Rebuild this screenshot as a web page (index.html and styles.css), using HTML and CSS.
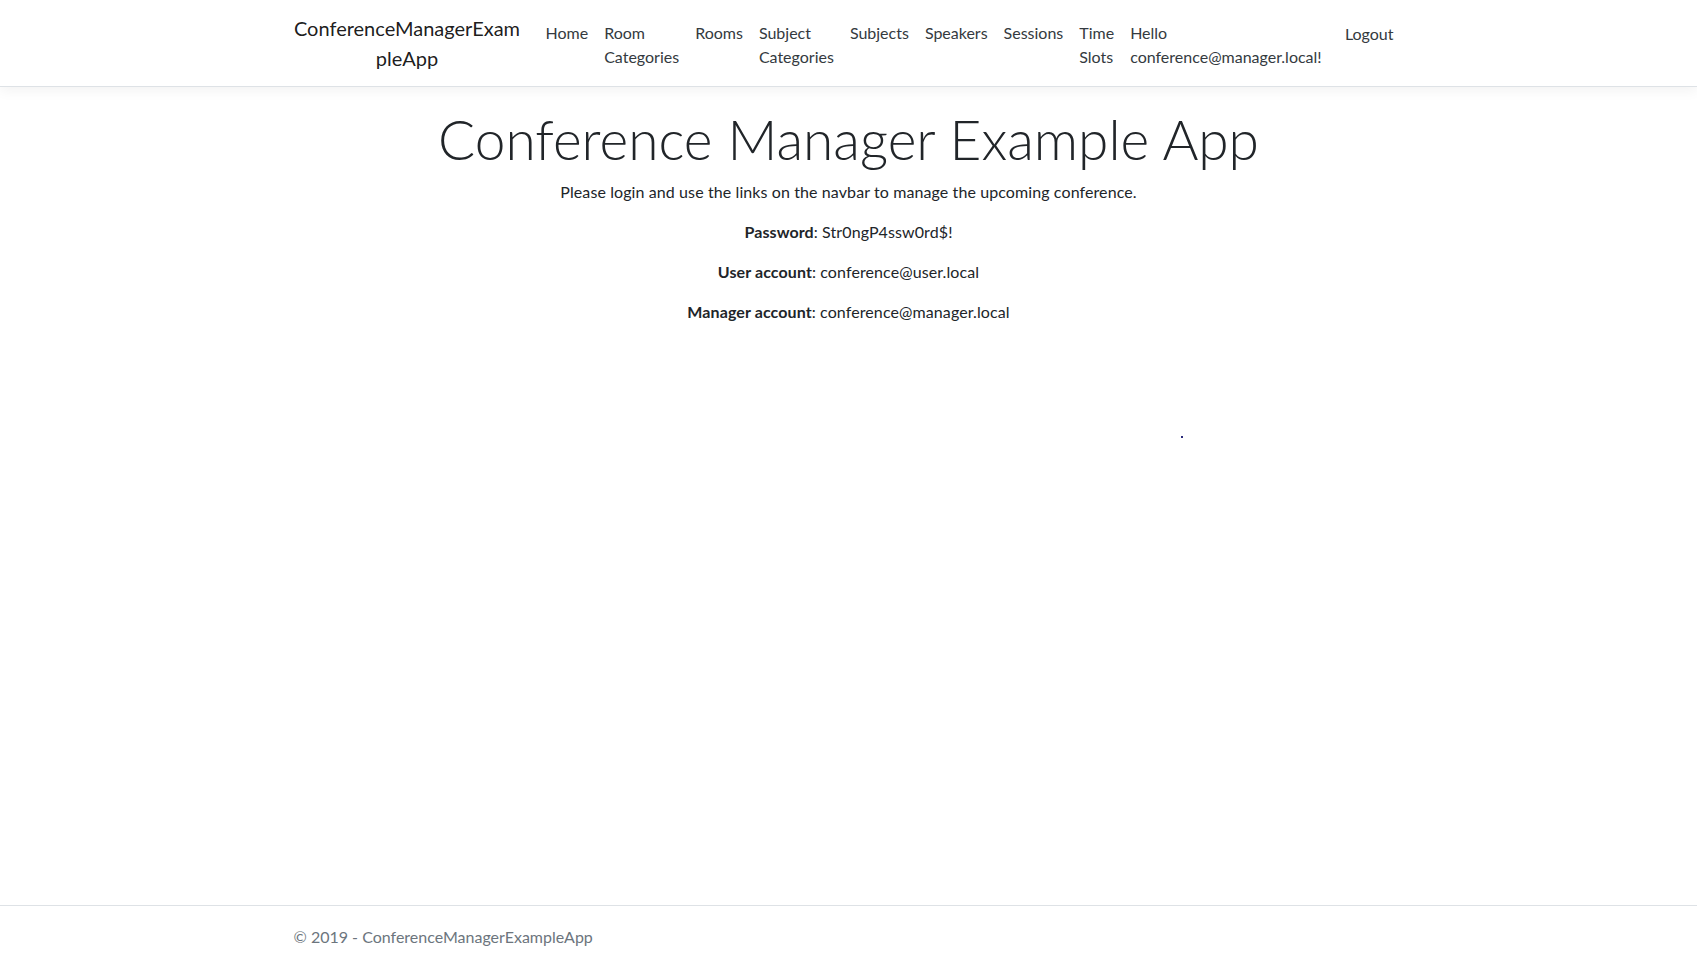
FILE: index.html
```html
<!DOCTYPE html>
<html lang="en">
<head>
<meta charset="utf-8">
<title>Home Page - ConferenceManagerExampleApp</title>
<link rel="stylesheet" href="styles.css">
</head>
<body>
<header class="navbar">
  <div class="container nav-row">
    <a class="brand" href="#">ConferenceManagerExam<br>pleApp</a>
    <ul class="nav-main">
      <li><a class="nav-link" href="#">Home</a></li>
      <li><a class="nav-link" href="#">Room<br>Categories</a></li>
      <li><a class="nav-link" href="#">Rooms</a></li>
      <li><a class="nav-link" href="#">Subject<br>Categories</a></li>
      <li><a class="nav-link" href="#">Subjects</a></li>
      <li><a class="nav-link" href="#">Speakers</a></li>
      <li><a class="nav-link" href="#">Sessions</a></li>
      <li><a class="nav-link" href="#">Time<br>Slots</a></li>
      <li><a class="nav-link" href="#">Hello<br>conference@manager.local!</a></li>
    </ul>
    <ul class="nav-login">
      <li><button class="nav-link logout" type="button">Logout</button></li>
    </ul>
  </div>
</header>
<main class="container content">
  <h1 class="display">Conference Manager Example App</h1>
  <p>Please login and use the links on the navbar to manage the upcoming conference.</p>
  <p><b>Password</b>: Str0ngP4ssw0rd$!</p>
  <p><b>User account</b>: conference@user.local</p>
  <p><b>Manager account</b>: conference@manager.local</p>
</main>
<footer class="footer">
  <div class="container">&copy; 2019 - ConferenceManagerExampleApp</div>
</footer>
<span class="dot"></span>
</body>
</html>
```
FILE: styles.css
```css
html, body {
  margin: 0;
  padding: 0;
}
body {
  font-family: "Lato", "Liberation Sans", sans-serif;
  font-size: 16px;
  line-height: 1.5;
  color: #212529;
  background: #fff;
  min-height: 100vh;
  display: flex;
  flex-direction: column;
  position: relative;
}
.container {
  width: 1140px;
  padding: 0 15px;
  margin: 0 auto;
  box-sizing: border-box;
}
.navbar {
  background: #fff;
  border-bottom: 1px solid #dee2e6;
  box-shadow: 0 .25rem .75rem rgba(0, 0, 0, .05);
  padding: 8px 0;
  margin-bottom: 16px;
}
.nav-row {
  display: flex;
  align-items: center;
}
.brand {
  font-size: 20px;
  line-height: 30px;
  padding: 5px 0;
  margin-right: 16px;
  width: 227px;
  text-align: center;
  color: rgba(0, 0, 0, .9);
  text-decoration: none;
}
.nav-main, .nav-login {
  list-style: none;
  margin: 0;
  padding: 0;
  display: flex;
}
.nav-main {
  flex-grow: 1;
  align-items: flex-start;
  padding-left: 1px;
}
.nav-login {
  align-self: stretch;
  align-items: flex-start;
  padding-top: 3px;
}
.nav-link {
  display: block;
  padding: 10px 8px 6px;
  color: #343a40;
  text-decoration: none;
  white-space: nowrap;
  font: inherit;
  line-height: 24px;
}
.logout {
  background: none;
  border: 0;
  cursor: pointer;
  padding-top: 11px;
  margin-right: 2px;
}
.content {
  text-align: center;
  padding-bottom: 16px;
}
.display {
  font-size: 55px;
  font-weight: 300;
  line-height: 1.2;
  margin: 3px 0 8px;
}
.content p {
  margin: 0 0 16px;
  letter-spacing: 0.1px;
}
.content b {
  font-weight: 700;
}
.footer {
  margin-top: auto;
  border-top: 1px solid #dee2e6;
  height: 61px;
  line-height: 58px;
  padding-top: 2px;
  box-sizing: border-box;
  color: #6c757d;
}
.dot {
  position: absolute;
  left: 1181px;
  top: 436px;
  width: 2px;
  height: 2px;
  background: #2a2a7a;
}
```
